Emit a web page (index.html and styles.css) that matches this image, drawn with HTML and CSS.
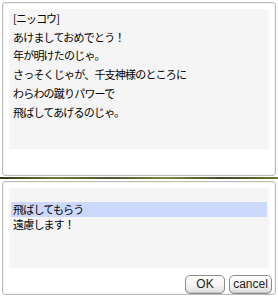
FILE: index.html
```html
<!DOCTYPE html>
<html lang="ja">
<head>
<meta charset="utf-8">
<link rel="stylesheet" href="styles.css">
</head>
<body>
<div class="screen">
  <div class="win win-msg">
    <div class="panel msg">
      <div>[ニッコウ]</div>
      <div>あけましておめでとう！</div>
      <div>年が明けたのじゃ。</div>
      <div>さっそくじゃが、千支神様のところに</div>
      <div>わらわの蹴りパワーで</div>
      <div>飛ばしてあげるのじゃ。</div>
    </div>
  </div>
  <div class="gap"></div>
  <div class="win win-menu">
    <div class="panel menu">
      <div class="item selected">飛ばしてもらう</div>
      <div class="item">遠慮します！</div>
    </div>
    <div class="buttons">
      <button class="btn btn-ok">OK</button>
      <button class="btn btn-cancel">cancel</button>
    </div>
  </div>
</div>
</body>
</html>
```

FILE: styles.css
```css
html, body {
  margin: 0;
  padding: 0;
  background: #ffffff;
}

.screen {
  width: 278px;
  height: 297px;
  overflow: hidden;
  background: #ffffff;
  font-family: "Noto Sans CJK JP", "DejaVu Sans", sans-serif;
  font-size: 11px;
  color: #000;
  display: flex;
  flex-direction: column;
}

.win {
  box-sizing: border-box;
  margin: 0 2px;
  width: 274px;
  border: 1px solid #bcbcbc;
  border-radius: 3px;
  background: #ffffff;
  box-shadow: inset 0 0 0 1px #f2f2f2;
  padding: 6px;
}

.win-msg {
  margin-top: 2px;
  height: 174px;
}

.gap {
  margin-top: 1px;
  height: 2px;
  background: linear-gradient(90deg, #2f3a18 0%, #6f7a3a 20%, #4a5530 40%, #7d8a48 60%, #3e4a26 80%, #6a7a36 100%);
}

.win-menu {
  margin-top: 2px;
  height: 114px;
  display: flex;
  flex-direction: column;
}

.panel {
  background: #f5f5f5;
}

.msg {
  height: 140px;
  padding: 0 4px;
  line-height: 18.7px;
  letter-spacing: -0.8px;
  white-space: nowrap;
}

.menu {
  height: 80px;
  padding: 14px 2px 0 2px;
  box-sizing: border-box;
}

.item {
  height: 15px;
  line-height: 15px;
  padding-left: 2px;
  letter-spacing: -0.8px;
  white-space: nowrap;
}

.item.selected {
  background: #ccd9fc;
}

.buttons {
  display: flex;
  justify-content: flex-end;
  gap: 4px;
  margin-top: auto;
  margin-right: -3px;
  margin-bottom: -6px;
}

.btn {
  box-sizing: border-box;
  height: 19px;
  padding: 0;
  border: 1px solid #8c8c8c;
  border-radius: 5px;
  background: linear-gradient(180deg, #ffffff 0%, #f4f4f4 55%, #dcdcdc 100%);
  font-family: "Liberation Sans", Arial, sans-serif;
  font-size: 12px;
  color: #222;
  line-height: 17px;
  box-shadow: inset 0 -1px 0 #c4c4c4;
}

.btn-ok {
  width: 40px;
}

.btn-cancel {
  width: 43px;
}
```
